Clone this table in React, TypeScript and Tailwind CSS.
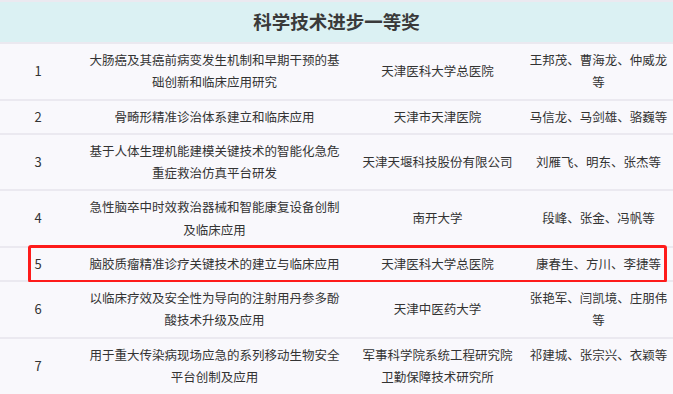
const rows = [
  {
    no: '1',
    title: '大肠癌及其癌前病变发生机制和早期干预的基础创新和临床应用研究',
    unit: '天津医科大学总医院',
    people: '王邦茂、曹海龙、仲威龙等',
  },
  { no: '2', title: '骨畸形精准诊治体系建立和临床应用', unit: '天津市天津医院', people: '马信龙、马剑雄、骆巍等' },
  {
    no: '3',
    title: '基于人体生理机能建模关键技术的智能化急危重症救治仿真平台研发',
    unit: '天津天堰科技股份有限公司',
    people: '刘雁飞、明东、张杰等',
  },
  {
    no: '4',
    title: '急性脑卒中时效救治器械和智能康复设备创制及临床应用',
    unit: '南开大学',
    people: '段峰、张金、冯帆等',
  },
  {
    no: '5',
    title: '脑胶质瘤精准诊疗关键技术的建立与临床应用',
    unit: '天津医科大学总医院',
    people: '康春生、方川、李捷等',
    marked: true,
  },
  {
    no: '6',
    title: '以临床疗效及安全性为导向的注射用丹参多酚酸技术升级及应用',
    unit: '天津中医药大学',
    people: '张艳军、闫凯境、庄朋伟等',
  },
  {
    no: '7',
    title: '用于重大传染病现场应急的系列移动生物安全平台创制及应用',
    unit: '军事科学院系统工程研究院卫勤保障技术研究所',
    people: '祁建城、张宗兴、衣颖等',
  },
]

export default function App() {
  return (
    <div
      className="w-[673px] h-[394px] overflow-hidden bg-[#ebe9f0] pt-[2px] text-[#333] flex flex-col"
      style={{ fontFamily: '"Noto Sans CJK SC", "Noto Sans", sans-serif' }}
    >
      {/* Award heading */}
      <div className="h-[40px] shrink-0 bg-[#dbf1f3] flex items-center justify-center">
        <h2 className="text-[18.5px] font-bold text-[#3a3a3a]">科学技术进步一等奖</h2>
      </div>

      <div className="flex-1 flex flex-col gap-[2px] pt-[2px]">
        {rows.map((row, i) => (
          <div
            key={row.no}
            className={`relative grid grid-cols-[76px_277px_169px_151px] bg-[#f9f8fc] text-[12.5px] leading-[22.25px] ${
              i === rows.length - 1 ? 'flex-1 items-start' : ''
            }`}
          >
            <div className="flex items-center justify-center py-[5px] text-[13px] self-stretch">{row.no}</div>
            <div className="flex items-center justify-center py-[5px] px-[10px] text-center">{row.title}</div>
            <div className="flex items-center justify-center py-[5px] px-[5px] text-center">{row.unit}</div>
            <div className="flex items-center justify-center py-[5px] pl-[4px] pr-[2px] text-center">{row.people}</div>
            {row.marked && (
              <div className="absolute -top-[3px] -bottom-[3px] left-[28px] right-[6px] border-[3px] border-[#fe1b1b] rounded-[3px] pointer-events-none" />
            )}
          </div>
        ))}
      </div>
    </div>
  )
}
